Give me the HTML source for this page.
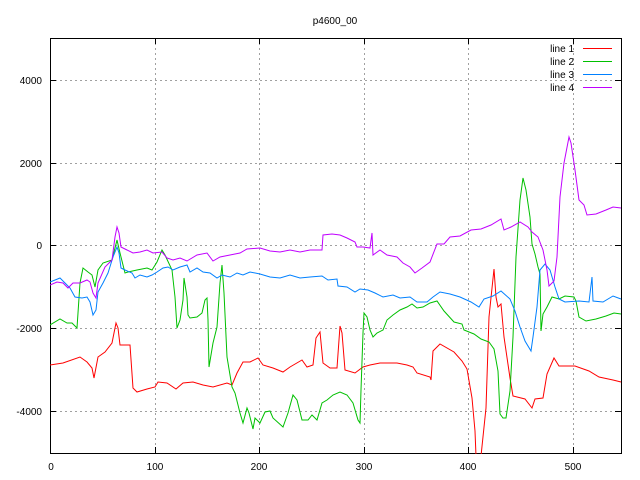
<!DOCTYPE html>
<html><head><meta charset="utf-8"><style>
html,body{margin:0;padding:0;background:#fff;}
svg{display:block}
text{font-family:"Liberation Sans",sans-serif;font-size:10px;fill:#000}
</style></head><body>
<svg width="640" height="480" viewBox="0 0 640 480" xmlns="http://www.w3.org/2000/svg">
<rect width="640" height="480" fill="#fff"/>
<g stroke="#a0a0a0" stroke-width="1" stroke-dasharray="2,3" fill="none">
<line x1="50" y1="80.5" x2="621" y2="80.5"/>
<line x1="50" y1="163.5" x2="621" y2="163.5"/>
<line x1="50" y1="245.5" x2="621" y2="245.5"/>
<line x1="50" y1="328.5" x2="621" y2="328.5"/>
<line x1="50" y1="411.5" x2="621" y2="411.5"/>
<line x1="155.5" y1="38" x2="155.5" y2="453"/>
<line x1="259.5" y1="38" x2="259.5" y2="453"/>
<line x1="364.5" y1="38" x2="364.5" y2="453"/>
<line x1="468.5" y1="38" x2="468.5" y2="453"/>
<line x1="573.5" y1="38" x2="573.5" y2="453"/>
</g>
<g stroke="#000" stroke-width="1" fill="none">
<rect x="50.5" y="38.5" width="571" height="415"/>
<path d="M50 80.5h6M50 163.5h6M50 245.5h6M50 328.5h6M50 411.5h6M621 80.5h-6M621 163.5h-6M621 245.5h-6M621 328.5h-6M621 411.5h-6M155.5 453v-6M259.5 453v-6M364.5 453v-6M468.5 453v-6M573.5 453v-6M155.5 38v6M259.5 38v6M364.5 38v6M468.5 38v6M573.5 38v6"/>
</g>
<text x="335" y="24" text-anchor="middle">p4600_00</text>
<g text-anchor="end">
<text x="42" y="84">4000</text>
<text x="42" y="167">2000</text>
<text x="42" y="249">0</text>
<text x="42" y="332">-2000</text>
<text x="42" y="415">-4000</text>
</g>
<g text-anchor="middle">
<text x="51" y="470">0</text>
<text x="155" y="470">100</text>
<text x="259" y="470">200</text>
<text x="364" y="470">300</text>
<text x="468" y="470">400</text>
<text x="573" y="470">500</text>
</g>
<g text-anchor="end">
<text x="574" y="52">line 1</text>
<text x="574" y="65">line 2</text>
<text x="574" y="78">line 3</text>
<text x="574" y="91">line 4</text>
</g>
<path d="M583 48.5h29" stroke="#ff0000"/>
<path d="M583 61.5h29" stroke="#00c000"/>
<path d="M583 74.5h29" stroke="#0080ff"/>
<path d="M583 87.5h29" stroke="#c000ff"/>
<svg x="50" y="38" width="572" height="416" viewBox="50 38 572 416" overflow="hidden">
<g fill="none" stroke-width="1" stroke-linejoin="miter">
<polyline stroke="#ff0000" points="50,365 63,363 80,357 87,362 92,368 94,378 98,357 105,352 112,343 116,323 118,328 120,345 130,345 133,388 137,392 147,389 155,387 158,382 167,383 176,389 183,383 193,382 203,385 213,387 227,383 232,385 237,373 243,362 250,362 258,358 263,365 273,368 283,372 290,367 302,360 307,367 313,365 316,338 320,332 323,363 330,368 337,368 340,326 342,333 345,370 355,373 363,367 370,365 380,363 397,363 407,365 413,367 417,373 430,377 431,380 433,351 440,344 454,352 462,361 467,369 472,398 475,431 476,456 481,456 486,408 489,317 494,269 496,297 498,307 501,304 504,337 510,378 513,396 525,399 532,408 535,399 543,398 547,374 554,358 559,366 575,366 589,371 599,377 613,380 621,382"/>
<polyline stroke="#00c000" points="50,325 60,319 67,323 72,323 77,328 80,283 83,268 88,272 92,275 95,287 98,270 103,263 112,260 117,240 120,253 125,273 128,272 137,270 147,268 152,270 157,262 162,250 165,255 172,270 175,297 177,328 180,320 183,300 184,278 187,297 188,315 190,318 197,317 202,313 205,300 207,298 208,320 209,367 213,343 217,327 220,283 222,265 224,293 227,357 232,387 235,393 240,413 243,423 247,408 249,413 253,429 255,418 260,423 265,412 270,411 273,418 283,427 288,413 293,395 297,400 302,420 308,420 312,415 317,420 322,403 327,400 333,395 340,392 347,395 353,403 358,420 360,423 361,390 363,333 364,313 367,317 370,330 373,337 377,333 383,330 387,320 393,315 400,310 407,307 412,304 417,308 423,307 430,303 437,301 444,311 454,322 462,324 464,330 474,334 481,339 489,342 494,349 498,371 500,414 503,418 506,418 510,391 513,337 516,257 520,200 523,178 526,190 530,217 532,244 535,254 538,267 540,274 541,331 543,314 547,307 552,297 559,299 565,296 574,297 576,301 579,317 586,321 596,319 606,316 614,313 621,314"/>
<polyline stroke="#0080ff" points="50,282 60,278 65,283 70,288 75,297 82,298 87,297 90,302 93,315 96,310 98,292 103,283 108,273 113,257 117,247 119,253 121,268 125,270 132,273 135,278 140,275 147,277 152,275 157,272 163,268 168,267 173,270 180,267 187,265 190,272 197,268 203,272 210,273 217,278 222,275 230,277 237,273 243,275 250,272 260,274 270,277 280,278 290,275 300,278 310,277 322,276 328,280 337,279 338,286 347,287 355,292 360,289 368,290 375,293 383,297 393,295 400,298 410,297 417,302 427,302 433,297 440,292 450,294 460,297 471,302 479,307 484,299 493,296 501,291 510,299 515,311 520,327 525,341 531,351 533,337 537,307 540,270 545,264 550,270 555,287 559,299 565,302 579,301 589,302 592,277 593,301 603,302 613,296 621,299"/>
<polyline stroke="#c000ff" points="50,285 57,282 63,283 68,288 73,283 80,283 87,280 90,282 93,293 96,298 98,283 105,267 112,260 115,237 117,227 119,233 121,247 127,250 133,253 140,252 147,250 153,253 162,252 167,258 173,260 180,258 187,261 197,255 207,253 213,261 220,257 230,255 240,253 247,249 260,248 270,251 280,252 290,250 300,252 310,250 322,250 323,235 332,234 340,235 347,238 355,242 357,247 363,247 370,248 372,233 373,255 380,250 387,255 397,257 403,263 410,267 415,273 422,268 430,262 437,244 444,244 450,237 460,236 471,230 481,229 491,225 501,219 504,230 511,227 520,222 528,227 532,232 538,237 543,250 547,270 549,286 554,281 557,257 560,197 564,163 569,137 571,143 575,170 579,200 584,205 587,215 596,214 606,210 613,207 621,208"/>
</g>
</svg>
</svg>
</body></html>
